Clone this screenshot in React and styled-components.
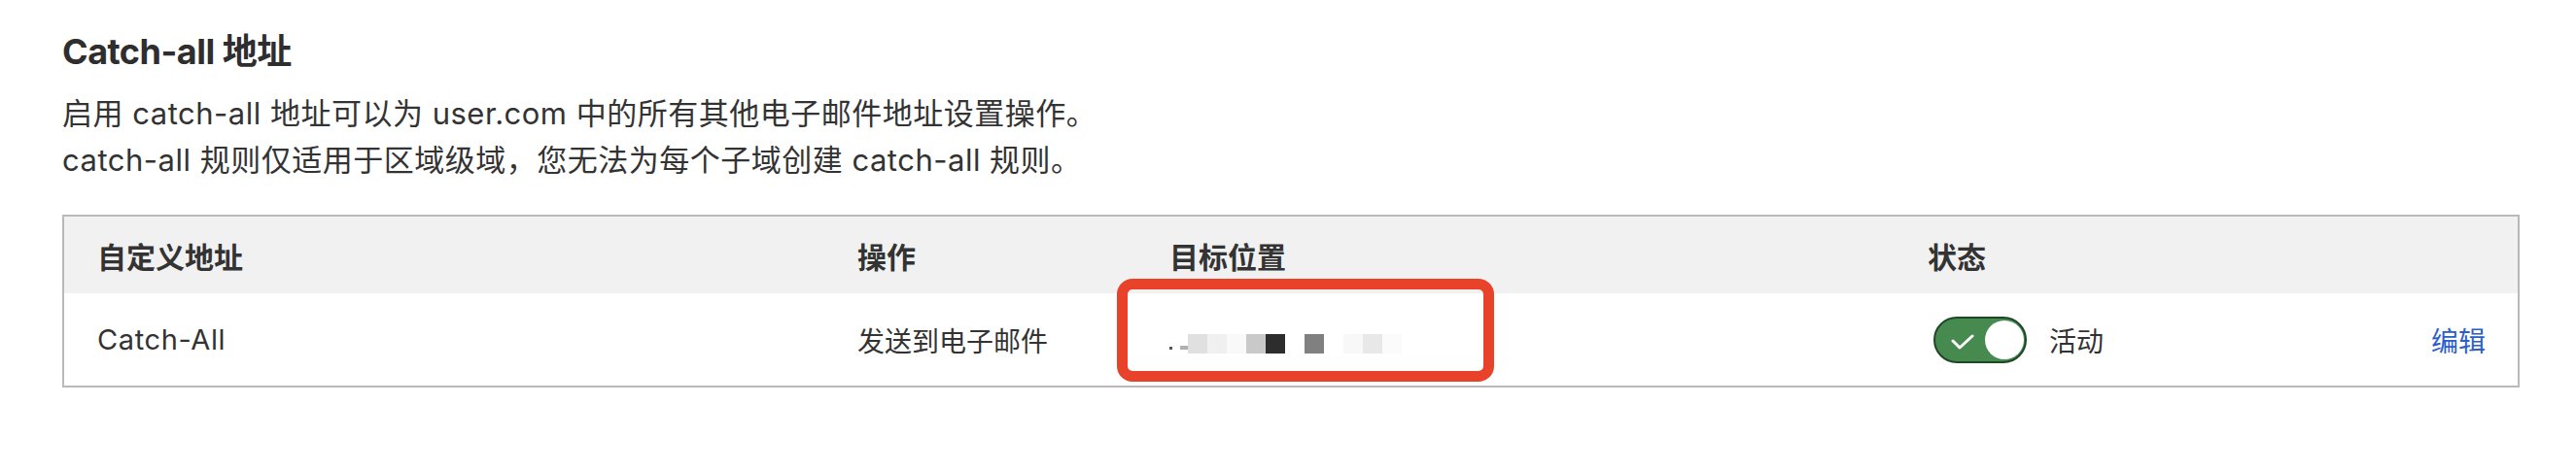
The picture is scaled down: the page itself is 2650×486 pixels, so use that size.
import React from "react";
import styled, { createGlobalStyle } from "styled-components";

const GlobalStyle = createGlobalStyle`
  html, body {
    margin: 0;
    background: #ffffff;
  }
  body {
    font-family: Inter, "Noto Sans CJK SC", sans-serif;
    color: #333333;
  }
`;

const Page = styled.div`
  padding: 29px 58px 40px 64px;
`;

const Title = styled.h2`
  margin: 0;
  font-size: 36px;
  letter-spacing: -0.5px;
  line-height: 48px;
  font-weight: 700;
  color: #2e2e2e;
`;

const Description = styled.p`
  margin: 16px 0 32px;
  font-size: 31px;
  letter-spacing: 0.5px;
  line-height: 48px;
`;

const Table = styled.div`
  border: 2px solid #b9b9b9;
`;

const Row = styled.div`
  display: grid;
  grid-template-columns: 782px 321px 780px 1fr auto;
  height: ${pr => (pr.$head ? "79px" : "95px")};
  background: ${pr => (pr.$head ? "#f1f1f1" : "#ffffff")};
`;

const Cell = styled.div`
  position: relative;
  display: flex;
  align-items: center;
  padding: ${pr => (pr.$right ? "0 33px 0 0" : "0 0 0 34px")};
  font-size: ${pr => (pr.$head ? "30px" : "28px")};
  font-weight: ${pr => (pr.$head ? 700 : 400)};
  white-space: nowrap;
`;

const Latin = styled.span`
  font-size: 29px;
  letter-spacing: 0.6px;
`;

const Highlight = styled.div`
  position: absolute;
  left: -20px;
  top: -15px;
  width: 388px;
  height: 106px;
  box-sizing: border-box;
  border: 11px solid #e8422a;
  border-radius: 16px;
  pointer-events: none;
`;

const Blurred = styled.div`
  display: flex;
  align-items: center;
  height: 20px;
  margin-top: 9px;
`;

const Dot = styled.span`
  width: ${pr => pr.$w}px;
  height: ${pr => pr.$h}px;
  margin-right: ${pr => pr.$gap}px;
  background: ${pr => pr.$c};
  align-self: flex-end;
  margin-bottom: 4px;
`;

const Pixel = styled.span`
  width: 20px;
  height: 20px;
  background: ${pr => pr.$c};
`;

const Toggle = styled.div`
  position: relative;
  box-sizing: border-box;
  width: 96px;
  height: 48px;
  margin-left: 6px;
  border: 2px solid #1f4726;
  border-radius: 24px;
  background: #468a50;
`;

const Knob = styled.span`
  position: absolute;
  top: 2px;
  right: 1px;
  width: 40px;
  height: 40px;
  border-radius: 50%;
  background: #ffffff;
`;

const Check = styled.svg`
  position: absolute;
  left: 14px;
  top: 14px;
`;

const StatusText = styled.span`
  margin-left: 23px;
`;

const EditLink = styled.a`
  color: #2c5ec8;
  text-decoration: none;
  cursor: pointer;
`;

const pixels = [
  "#e0e0e0", "#f0f0f0", "#f9f9f9", "#c9c9c9", "#2d2d2d", "#ffffff",
  "#808080", "#ffffff", "#f8f8f8", "#e8e8e8", "#fbfbfb",
];

const App = () => {
  return (
    <Page>
      <GlobalStyle />
      <Title>Catch-all 地址</Title>
      <Description>
        启用 catch-all 地址可以为 user.com 中的所有其他电子邮件地址设置操作。
        <br />
        catch-all 规则仅适用于区域级域，您无法为每个子域创建 catch-all 规则。
      </Description>
      <Table>
        <Row $head>
          <Cell $head>自定义地址</Cell>
          <Cell $head>操作</Cell>
          <Cell $head>目标位置</Cell>
          <Cell $head>状态</Cell>
          <Cell $head $right />
        </Row>
        <Row>
          <Cell><Latin>Catch-All</Latin></Cell>
          <Cell>发送到电子邮件</Cell>
          <Cell>
            <Blurred>
              <Dot $w={3} $h={3} $gap={8} $c="#555555" />
              <Dot $w={8} $h={4} $gap={0} $c="#b0b0b0" />
              {pixels.map((c, i) => (
                <Pixel key={i} $c={c} />
              ))}
            </Blurred>
            <Highlight />
          </Cell>
          <Cell>
            <Toggle>
              <Check width="26" height="20" viewBox="0 0 26 20">
                <polyline
                  points="4,9 11,16 24,4"
                  fill="none"
                  stroke="#ffffff"
                  strokeWidth="3"
                  strokeLinecap="round"
                  strokeLinejoin="round"
                />
              </Check>
              <Knob />
            </Toggle>
            <StatusText>活动</StatusText>
          </Cell>
          <Cell $right>
            <EditLink>编辑</EditLink>
          </Cell>
        </Row>
      </Table>
    </Page>
  );
};

export default App;
